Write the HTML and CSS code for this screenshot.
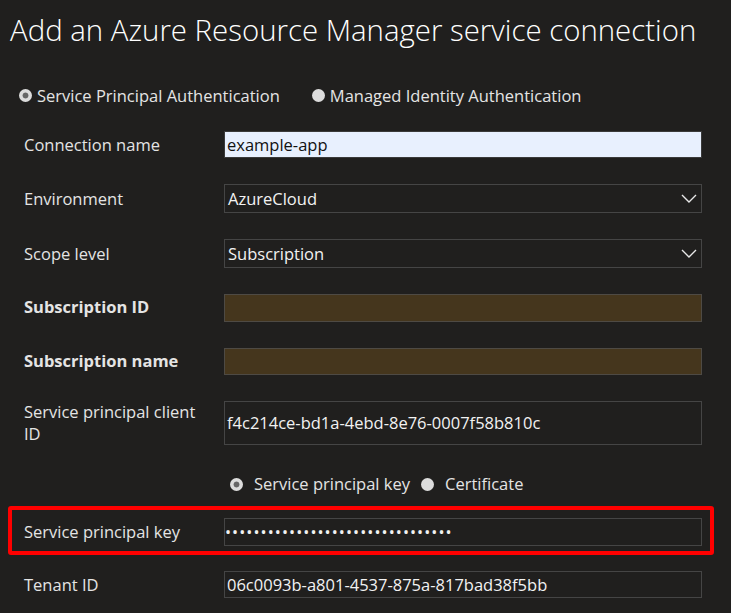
FILE: index.html
```html
<!DOCTYPE html>
<html lang="en">
<head>
<meta charset="utf-8">
<title>Add an Azure Resource Manager service connection</title>
<link rel="stylesheet" href="styles.css">
</head>
<body>
<div class="page">
  <h1 class="title">Add an Azure Resource Manager service connection</h1>

  <div class="auth-row">
    <label class="radio"><span class="dot selected"></span>Service Principal Authentication</label>
    <label class="radio"><span class="dot"></span>Managed Identity Authentication</label>
  </div>

  <div class="form">
    <div class="row r-conn">
      <div class="label">Connection name</div>
      <div class="box box-text autofill">example-app</div>
    </div>
    <div class="row r-env">
      <div class="label">Environment</div>
      <div class="box box-select">AzureCloud<svg class="chev" viewBox="0 0 16 9"><path d="M1 1 L8 8 L15 1" fill="none" stroke="#e8e8e8" stroke-width="1.4"/></svg></div>
    </div>
    <div class="row r-scope">
      <div class="label">Scope level</div>
      <div class="box box-select">Subscription<svg class="chev" viewBox="0 0 16 9"><path d="M1 1 L8 8 L15 1" fill="none" stroke="#e8e8e8" stroke-width="1.4"/></svg></div>
    </div>
    <div class="row r-subid">
      <div class="label bold">Subscription ID</div>
      <div class="box box-required"></div>
    </div>
    <div class="row r-subname">
      <div class="label bold">Subscription name</div>
      <div class="box box-required"></div>
    </div>
    <div class="row r-client">
      <div class="label two-line">Service principal client ID</div>
      <div class="box box-tall">f4c214ce-bd1a-4ebd-8e76-0007f58b810c</div>
    </div>
    <div class="row r-keytype">
      <div class="label"></div>
      <div class="keytypes">
        <label class="radio"><span class="dot selected"></span>Service principal key</label>
        <label class="radio"><span class="dot"></span>Certificate</label>
      </div>
    </div>
    <div class="row r-key highlight">
      <div class="label">Service principal key</div>
      <div class="box box-key">••••••••••••••••••••••••••••••••</div>
    </div>
    <div class="row r-tenant">
      <div class="label">Tenant ID</div>
      <div class="box box-text">06c0093b-a801-4537-875a-817bad38f5bb</div>
    </div>
  </div>
</div>
</body>
</html>
```

FILE: styles.css
```css
html, body {
  margin: 0;
  padding: 0;
  background: #201f1e;
}
body {
  font-family: "Open Sans", "Noto Sans", sans-serif;
  color: #e4e4e4;
  width: 731px;
  height: 613px;
  overflow: hidden;
}
.page {
  padding-top: 10px;
}
.title {
  margin: 0 0 0 10px;
  font-size: 29.4px;
  font-weight: 300;
  color: #ffffff;
  line-height: 40px;
  white-space: nowrap;
}
.auth-row {
  display: flex;
  gap: 32px;
  margin-top: 35px;
  padding-left: 19px;
  height: 20px;
  align-items: center;
  font-size: 16.5px;
}
.radio {
  display: flex;
  align-items: center;
  gap: 5px;
  white-space: nowrap;
}
.dot {
  width: 13px;
  height: 13px;
  border-radius: 50%;
  background: #dcdcdc;
  box-sizing: border-box;
  flex: none;
}
.dot.selected {
  background: radial-gradient(circle, #666 0 2.6px, #dcdcdc 3.3px);
}
.form {
  display: flex;
  flex-direction: column;
  margin-top: 26px;
}
.row {
  display: grid;
  grid-template-columns: 200px 478px;
  align-items: center;
  padding-left: 24px;
  margin-top: 26px;
  font-size: 16.5px;
  line-height: 22px;
}
.row.r-conn { margin-top: 0; }
.label {
  white-space: nowrap;
}
.label.bold {
  font-weight: 700;
}
.label.two-line {
  white-space: normal;
  line-height: 22px;
  width: 180px;
}
.box {
  box-sizing: border-box;
  border: 1px solid #454545;
  display: flex;
  align-items: center;
  padding-left: 2px;
  font-size: 16.5px;
  color: #f2f2f2;
  white-space: nowrap;
}
.box-text { height: 27px; }
.autofill {
  background: #e8f0fe;
  color: #111;
  border-color: #3a3a3a;
}
.box-select {
  height: 29px;
  justify-content: space-between;
  padding-left: 3px;
  padding-right: 4px;
}
.chev {
  width: 16px;
  height: 9px;
}
.box-required {
  height: 28px;
  background: #45361d;
  border-color: #4e4a44;
}
.r-subname .box-required { height: 27px; }
.r-subid .label, .r-subname .label { margin-top: -2px; }
.box-tall {
  height: 44px;
}
.r-keytype {
  height: 28px;
  margin-top: 25px;
}
.keytypes {
  display: flex;
  gap: 11px;
  padding-left: 6px;
}
.keytypes .radio { gap: 11px; }
.highlight {
  margin: 8px 17px 0 8px;
  padding: 8px 8px 5px 12px;
  border: 4px solid #ff0000;
  border-radius: 3px;
}
.box-key {
  height: 28px;
  font-size: 16px;
  letter-spacing: 1.1px;
  padding-left: 0;
}
.r-tenant { margin-top: 16px; }
```
